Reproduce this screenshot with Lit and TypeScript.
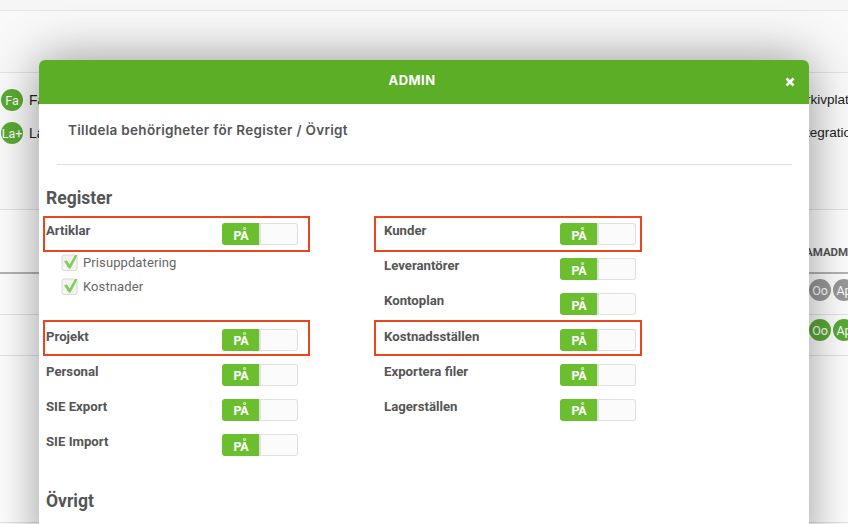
import { LitElement, html, css } from "lit";
import { customElement } from "lit/decorators.js";

type Row = { label: string; boxed?: boolean; lift?: boolean; subs?: string[] };

const LEFT: Row[] = [
  { label: "Artiklar", boxed: true, subs: ["Prisuppdatering", "Kostnader"] },
  { label: "Projekt", boxed: true, lift: true },
  { label: "Personal" },
  { label: "SIE Export" },
  { label: "SIE Import" },
];
const RIGHT: Row[] = [
  { label: "Kunder", boxed: true },
  { label: "Leverantörer" },
  { label: "Kontoplan" },
  { label: "Kostnadsställen", boxed: true, lift: true },
  { label: "Exportera filer" },
  { label: "Lagerställen" },
];

@customElement("app-root")
export class AppRoot extends LitElement {
  static styles = css`
    :host {
      display: block;
      position: relative;
      width: 848px;
      height: 524px;
      overflow: hidden;
      background: #fff;
      font-family: Roboto, "Liberation Sans", sans-serif;
    }
    .page { display: flex; flex-direction: column; height: 524px; }
    .band { border-bottom: 1px solid #e4e4e4; flex: none; }
    .b0 { height: 10px; background: #f6f6f6; }
    .b1 { height: 61px; background: #f9f9f9; }
    .b2 {
      height: 137px;
      background: #fbfbfb;
      display: flex;
      justify-content: space-between;
      padding-top: 16px;
      box-sizing: border-box;
    }
    .b3 {
      height: 64px;
      background: #fff;
      border-bottom: 2px solid #b4b4b4;
      box-sizing: border-box;
      display: flex;
      padding: 35px 0 0 805px;
      font-size: 11.5px;
      line-height: 15px;
      font-weight: 700;
      color: #555;
      white-space: nowrap;
    }
    .b4 { height: 41px; background: #fff; box-sizing: border-box; }
    .b5 { height: 41px; background: #fff; box-sizing: border-box; }
    .b6 { flex: 1; background: #fff; border-bottom: 1px solid #e4e4e4; margin-bottom: 1px; }
    .people { display: flex; flex-direction: column; gap: 11px; padding-left: 1px; }
    .person { display: flex; align-items: center; gap: 6px; height: 22px; font: 14px "Liberation Sans", sans-serif; color: #222; white-space: nowrap; }
    .tools { display: flex; flex-direction: column; gap: 11px; width: 42px; white-space: nowrap; font: 13.5px "Liberation Sans", sans-serif; color: #222; }
    .tools span { height: 22px; line-height: 22px; }
    .av {
      width: 22px; height: 22px; border-radius: 50%;
      background: #5aab35; color: #fff; flex: none;
      display: flex; align-items: center; justify-content: center;
      font: 12.5px Roboto, sans-serif;
    }
    .av.grey { background: #9a9a9a; }
    .avs { display: flex; gap: 2px; padding-left: 809px; }
    .b4 .avs { padding-top: 5px; }
    .b5 .avs { padding-top: 4px; }

    .modal {
      position: absolute;
      left: 39px; top: 60px;
      width: 770px; height: 500px;
      background: #fff;
      border-radius: 6px 6px 0 0;
      box-shadow: 0 0 50px rgba(0, 0, 0, 0.42);
    }
    .head {
      position: relative;
      height: 44px;
      background: #5cae26;
      border-radius: 6px 6px 0 0;
      color: #fff;
      display: flex; align-items: center; justify-content: center;
      padding: 0 24px 5px 0;
      box-sizing: border-box;
      font: 700 13px Inter, sans-serif;
      letter-spacing: 0.45px;
    }
    .close {
      position: absolute; right: 14px; top: 17px;
      width: 10px; height: 10px;
    }
    .sub {
      margin: 0;
      padding: 18px 0 0 29px;
      height: 42px;
      box-sizing: content-box;
      font: 600 13.5px Inter, sans-serif;
      letter-spacing: 0.3px;
      line-height: 16px;
      color: #555;
    }
    .rule { height: 1px; background: #e0e0e0; margin: 0 17px 0 18px; }
    h2 {
      margin: 0;
      font-size: 17.5px;
      font-weight: 700;
      color: #555;
      line-height: 22px;
      padding-left: 7px;
    }
    .reg { padding-top: 22px; padding-bottom: 7px; }
    .grid { display: grid; grid-template-columns: 338px 300px; padding-left: 7px; }
    .col { display: flex; flex-direction: column; }
    .row {
      position: relative;
      width: 252px; height: 35.2px;
      flex: none;
      display: flex; align-items: flex-start; justify-content: space-between;
      padding-top: 7px;
      box-sizing: border-box;
    }
    .row.boxed::after {
      content: "";
      position: absolute;
      left: -3px; top: 0;
      width: 263px; height: 32px;
      border: 2px solid #e8461c;
      pointer-events: none;
    }
    .col.r .row.boxed::after { left: -10px; width: 264px; }
    .row.lift::after { top: -1.6px; }
    .label { font-size: 13.2px; font-weight: 700; color: #555; line-height: 15px; }
    .toggle { display: flex; width: 76px; height: 22px; flex: none; }
    .on {
      width: 37px;
      background: #6bbf2e;
      border-radius: 3px 0 0 3px;
      color: #fff;
      font-size: 12.5px;
      font-weight: 700;
      letter-spacing: -0.2px;
      display: flex; align-items: center; justify-content: center;
      padding: 2px 0 0 1px;
      box-sizing: border-box;
    }
    .off {
      flex: 1;
      background: #fbfbfb;
      border: 1px solid #e0e0e0;
      border-left-width: 2px;
      border-radius: 0 3px 3px 0;
    }
    .subs { display: flex; flex-direction: column; gap: 8px; padding: 3px 0 0 15px; height: 70.4px; box-sizing: border-box; flex: none; }
    .sub-row { display: flex; align-items: center; gap: 5px; height: 16px; font-size: 13px; letter-spacing: 0.1px; color: #666; }
    .sub-row svg { width: 17px; height: 17px; flex: none; }
    .ovr { padding-top: 28px; }
  `;

  private toggle() {
    return html`<div class="toggle"><div class="on">PÅ</div><div class="off"></div></div>`;
  }

  private check() {
    return html`<svg viewBox="0 0 17 17">
      <rect x="1" y="1" width="15" height="15.5" rx="2" fill="#f4f4f4" stroke="#d8d8d8" />
      <path d="M3 7 L6 6.5 L8.6 10.5 L14 1 L16.6 1 L9.6 14.6 L7.6 14.6 Z" fill="#80cf58" />
    </svg>`;
  }

  private row(r: Row) {
    return html`<div class="row ${r.boxed ? "boxed" : ""} ${r.lift ? "lift" : ""}">
        <span class="label">${r.label}</span>${this.toggle()}
      </div>
      ${r.subs
        ? html`<div class="subs">
            ${r.subs.map((s) => html`<div class="sub-row">${this.check()}<span>${s}</span></div>`)}
          </div>`
        : ""}`;
  }

  render() {
    return html`
      <div class="page">
        <div class="band b0"></div>
        <div class="band b1"></div>
        <div class="band b2">
          <div class="people">
            <div class="person"><span class="av">Fa</span><span>Fakturering</span></div>
            <div class="person"><span class="av">La+</span><span>Lager</span></div>
          </div>
          <div class="tools"><span>rkivplats</span><span>tegration</span></div>
        </div>
        <div class="band b3">AMADMIN</div>
        <div class="band b4"><div class="avs"><span class="av grey">Oo</span><span class="av grey">Ap</span></div></div>
        <div class="band b5"><div class="avs"><span class="av">Oo</span><span class="av">Ap</span></div></div>
        <div class="b6"></div>
      </div>
      <div class="modal">
        <div class="head">
          ADMIN
          <svg class="close" viewBox="0 0 10 10">
            <path d="M1.5 1.5 L8.5 8.5 M8.5 1.5 L1.5 8.5" stroke="#fff" stroke-width="2.6" />
          </svg>
        </div>
        <p class="sub">Tilldela behörigheter för Register / Övrigt</p>
        <div class="rule"></div>
        <h2 class="reg">Register</h2>
        <div class="grid">
          <div class="col">${LEFT.map((r) => this.row(r))}</div>
          <div class="col r">${RIGHT.map((r) => this.row(r))}</div>
        </div>
        <h2 class="ovr">Övrigt</h2>
      </div>
    `;
  }
}
